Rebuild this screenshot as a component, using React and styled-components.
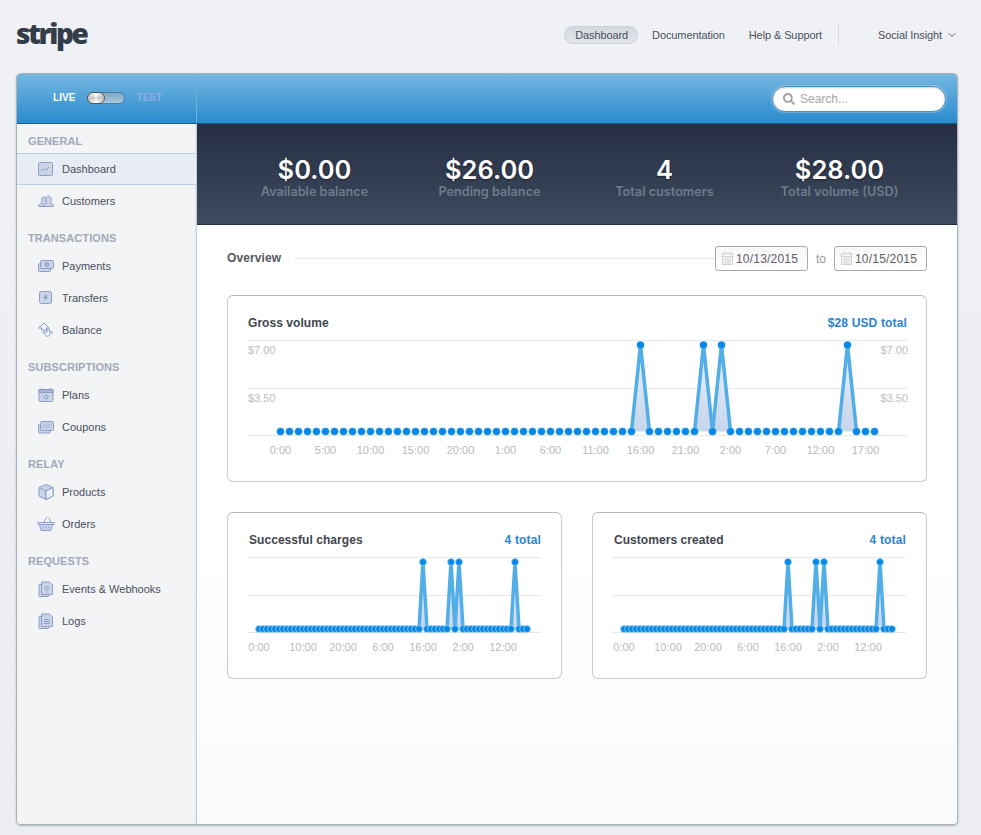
import React from 'react';
import styled, { createGlobalStyle } from 'styled-components';
import { FaSearch } from 'react-icons/fa';
import { ChevronDown } from 'lucide-react';

const GlobalStyle = createGlobalStyle`
    html, body {
        margin: 0;
        padding: 0;
    }
    body {
        background: #eef0f4;
        font-family: "Liberation Sans", Arial, sans-serif;
        font-size: 12px;
        color: #4b4f5c;
    }
    * {
        box-sizing: border-box;
    }
`;

const Page = styled.div`
    width: 981px;
    height: 835px;
    padding: 0 23px 10px 16px;
    background: linear-gradient(#eff1f5, #ebedf1);
`;

const Header = styled.header`
    height: 73px;
    display: flex;
    align-items: center;
    justify-content: space-between;
    padding-bottom: 3px;
`;

const Logo = styled.div`
    font-family: "Open Sans", "Noto Sans", sans-serif;
    font-weight: 800;
    font-size: 28px;
    letter-spacing: -2.4px;
    color: #333d47;
    line-height: 40px;
    margin-top: -4px;
`;

const Nav = styled.nav`
    display: flex;
    align-items: center;
    font-size: 11px;
    letter-spacing: -0.1px;
    color: #4a4f5c;
`;

const NavLink = styled.a`
    padding: 4px 10px 2px;
    margin-right: ${({ $gap }) => $gap || 4}px;
    height: 18px;
    line-height: 11px;
    border-radius: 9px;
    white-space: nowrap;
    ${({ $active }) =>
        $active
            ? `
        background: linear-gradient(#d5d9e1, #e1e4ea);
        border: 1px solid #ccd1da;
        padding: 3px 9px 1px 10px;
        margin-right: 4px;
    `
            : ''}
`;

const NavDivider = styled.div`
    width: 1px;
    height: 21px;
    background: #d5d8de;
    margin: 0 39px 0 5px;
`;

const AccountMenu = styled.div`
    display: flex;
    align-items: center;
    gap: 4px;
    white-space: nowrap;
    svg {
        color: #6a6f7c;
    }
`;

const Panel = styled.div`
    height: 752px;
    border: 1px solid #a9b2bf;
    border-radius: 5px;
    box-shadow: 0 1px 2px rgba(0, 0, 0, 0.25);
    overflow: hidden;
    display: flex;
    flex-direction: column;
    background: #fff;
`;

const TopBar = styled.div`
    height: 50px;
    flex: none;
    display: flex;
    background: linear-gradient(#74b7e1, #2a8bce);
    border-bottom: 1px solid #14608f;
`;

const ModeSwitch = styled.div`
    width: 180px;
    flex: none;
    border-right: 1px solid #6db1de;
    display: flex;
    align-items: center;
    padding: 0 0 2px 36px;
    font-size: 10px;
    font-weight: 700;
`;

const ModeLabel = styled.span`
    color: ${({ $on }) => ($on ? '#fff' : '#8eaee2')};
    letter-spacing: 0.05px;
`;

const Toggle = styled.div`
    width: 38px;
    height: 12px;
    margin: 0 11px 0 12px;
    border-radius: 6px;
    background: linear-gradient(#7fa9c4, #a9cadf);
    border: 1px solid #4a7ea3;
    position: relative;
`;

const ToggleKnob = styled.div`
    position: absolute;
    left: -1px;
    top: -1px;
    width: 18px;
    height: 12px;
    border-radius: 6px;
    border: 1px solid #555;
    background: conic-gradient(#fff, #c4c4c4, #fff, #c4c4c4, #fff);
`;

const SearchArea = styled.div`
    flex: 1;
    display: flex;
    align-items: center;
    justify-content: flex-end;
    padding-right: 11px;
`;

const SearchBox = styled.div`
    width: 174px;
    height: 26px;
    border-radius: 13px;
    background: #fff;
    border: 1px solid #4f8db8;
    box-shadow: inset 0 1px 2px rgba(0, 0, 0, 0.2), 0 0 0 1px rgba(255, 255, 255, 0.25);
    display: flex;
    align-items: center;
    gap: 5px;
    padding-left: 10px;
    font-size: 12px;
    color: #a8a8a8;
    svg {
        color: #a3a3a3;
    }
`;

const Body = styled.div`
    flex: 1;
    display: flex;
    min-height: 0;
`;

const Sidebar = styled.aside`
    width: 180px;
    flex: none;
    background: #f2f4f6;
    border-right: 1px solid #c4cfe0;
    box-shadow: inset -2px 0 2px -1px #e2e5ea;
`;

const SectionTitle = styled.h4`
    margin: 15px 0 6px;
    padding-left: 11px;
    height: 12px;
    line-height: 12px;
    font-size: 11px;
    font-weight: 700;
    color: #a2a8b9;
    letter-spacing: 0.08px;
    text-transform: uppercase;
    &:first-child {
        margin: 11px 0 7px;
    }
`;

const NavItem = styled.div`
    height: 32px;
    display: flex;
    align-items: center;
    padding-left: 21px;
    gap: 8px;
    font-size: 11px;
    color: #4b4f5c;
    ${({ $active }) =>
        $active
            ? `
        background: #e8edf5;
        border-top: 1px solid #bdd0e6;
        border-bottom: 1px solid #bdd0e6;
        margin-top: -1px;
    `
            : ''}
`;

const IconFrame = styled.svg`
    width: 16px;
    height: 16px;
    flex: none;
    overflow: visible;
    stroke: #8d9dc8;
    stroke-width: 1;
    fill: #ccd5e8;
`;

const Main = styled.main`
    flex: 1;
    min-width: 0;
    display: flex;
    flex-direction: column;
    background: linear-gradient(#fff, #fff 60%, #fafafa);
`;

const StatsBar = styled.section`
    height: 101px;
    flex: none;
    display: grid;
    grid-template-columns: repeat(4, 1fr);
    padding: 7px 30px 0;
    background: linear-gradient(#262f43, #3f4a5e);
    border-bottom: 1px solid #252c3d;
    align-items: center;
`;

const Stat = styled.div`
    text-align: center;
    font-family: Inter, sans-serif;
`;

const StatValue = styled.div`
    color: #fff;
    font-size: 25.5px;
    font-weight: 600;
    line-height: 28px;
    text-shadow: 0 1px 2px rgba(0, 0, 0, 0.5);
`;

const StatLabel = styled.div`
    color: #6f7a8b;
    font-size: 12.7px;
    font-weight: 600;
    line-height: 16px;
`;

const Content = styled.div`
    padding: 21px 30px 0;
`;

const OverviewRow = styled.div`
    height: 25px;
    display: flex;
    align-items: center;
`;

const OverviewTitle = styled.div`
    font-weight: 700;
    font-size: 12px;
    letter-spacing: 0.1px;
    color: #55585f;
    margin: 0 14px 2px 0;
`;

const DottedRule = styled.div`
    flex: 1;
    border-top: 1px dotted #dcdcdc;
    margin-bottom: 1px;
`;

const DateBox = styled.div`
    width: 93px;
    height: 25px;
    border: 1px solid #a9a9a9;
    border-radius: 3px;
    background: linear-gradient(#f7f7f7, #fff);
    display: flex;
    align-items: center;
    gap: 1px;
    padding-left: 5px;
    font-size: 12px;
    letter-spacing: 0.2px;
    color: #5f6166;
`;

const DateSeparator = styled.span`
    width: 26px;
    text-align: center;
    color: #9a9a9a;
    font-size: 12px;
`;

const Card = styled.section`
    height: ${({ $height }) => $height}px;
    border: 1px solid #c9c9c9;
    border-top-color: #b5b5b5;
    border-radius: 6px;
    background: #fff;
    padding: 20px ${({ $small }) => ($small ? '20px' : '18px')} 0 20px;
    flex: 1 1 0;
    min-width: 0;
`;

const CardHeader = styled.div`
    display: flex;
    justify-content: space-between;
    line-height: 14px;
    font-size: 12px;
    font-weight: 700;
    letter-spacing: 0.05px;
    color: #42454c;
    margin: ${({ $small }) => ($small ? '0 0 6px 1px' : '0 1px 6px 0')};
`;

const CardTotal = styled.span`
    color: #2b82d6;
    letter-spacing: 0.15px;
`;

const ChartSvg = styled.svg`
    display: block;
    font-family: "Liberation Sans", Arial, sans-serif;
    font-size: 11px;
`;

const CardRow = styled.div`
    display: flex;
    gap: 30px;
    margin-top: 30px;
`;

const OverviewCard = styled(Card)`
    margin-top: 24px;
`;

const icons = {
    dashboard: (
        <>
            <rect x="0.5" y="1.5" width="14" height="13" rx="1" />
            <path d="M3 10l2.5-2 2 1.5L11 6" fill="none" />
        </>
    ),
    customers: (
        <>
            <path d="M0.5 13.5c0-2.500 2-2.500 3.500-3.500-1-1.500-1-6 2-6 1.500 0 2.500 1 2.500 3v3l2 3.500z" />
            <path d="M5 13.500c0-2.500 2-3 3.500-3.500-1.200-1.500-1.200-7 2-7s3.200 5.500 2 7c1.500.5 3 1 3 3.500z" />
        </>
    ),
    payments: (
        <>
            <rect x="0.5" y="5.5" width="12" height="8" rx="1.5" />
            <rect x="2.5" y="2.5" width="13" height="8" rx="1" />
            <circle cx="9" cy="6.5" r="2" fill="#a9b6d6" />
        </>
    ),
    transfers: (
        <>
            <rect x="1.5" y="1.5" width="12" height="12" rx="2" />
            <path d="M7.5 10l-2.5-3h1.5V5h2v2H10z" fill="#8d9dc8" stroke="none" />
        </>
    ),
    balance: (
        <>
            <path d="M0.5 6L6 1l5 5H8.500v2h-5V6z" fill="#eef1f7" />
            <path d="M9 7h2.500v3h3L9.500 15 4.500 10h4.500z" fill="#eef1f7" />
        </>
    ),
    plans: (
        <>
            <rect x="1" y="2.500" width="14" height="12" rx="1.500" />
            <rect x="1" y="2.500" width="14" height="3" fill="#aab7d6" />
            <path d="M4 1v3M12 1v3" />
            <circle cx="8" cy="10" r="2" fill="none" />
        </>
    ),
    coupons: (
        <>
            <rect x="0.5" y="5" width="12" height="9" rx="1.500" />
            <rect x="2.500" y="2.500" width="13" height="9" rx="1" />
            <rect x="4.500" y="4.500" width="9" height="5" fill="#bcc7df" stroke="none" />
        </>
    ),
    products: (
        <>
            <path d="M8 0.5l7 3v8.500l-7 3.500-7-3.500V3.500z" />
            <path d="M1 3.500l7 3.500 7-3.500M8 7v8.500" fill="none" />
            <path d="M8 7l7-3.500V12l-7 3.500z" fill="#eef1f7" />
        </>
    ),
    orders: (
        <>
            <path d="M9 1L5 7M11 2l2 5" fill="none" />
            <path d="M0 6.500h16v2H0z" fill="#eef1f7" />
            <path d="M1.500 8.500h13l-1.500 6H3z" />
            <path d="M5 10.500v2M8 10.500v2M11 10.500v2" fill="none" />
        </>
    ),
    events: (
        <>
            <rect x="1" y="3.500" width="10" height="12" rx="1" />
            <path d="M3.500 1h8l3 3v9.500h-11z" />
            <path d="M6 7c2-1.500 4-1.500 6 0M7 9c1.200-1 2.800-1 4 0" fill="none" />
            <circle cx="9" cy="11" r="0.8" fill="#8d9dc8" stroke="none" />
        </>
    ),
    logs: (
        <>
            <rect x="1" y="3.500" width="10" height="12" rx="1" />
            <path d="M3.500 1h8l3 3v9.500h-11z" />
            <path d="M6 6.500h6M6 8.500h6M6 10.500h6" fill="none" />
        </>
    ),
};

const NavIcon = ({ name }) => <IconFrame viewBox="0 0 16 16">{icons[name]}</IconFrame>;

const CalendarIcon = () => (
    <svg width="14" height="15" viewBox="0 0 14 15" fill="none" stroke="#d2d2d2">
        <rect x="1.5" y="2.5" width="10" height="11" fill="#f4f4f4" />
        <path d="M1.500 5.500h10M4 1v2.500M9 1v2.500M3.500 8h6M3.500 10h6M3.500 12h6" />
    </svg>
);

const SpikeChart = ({ id, width, height, grid, baseY, peakY, points, peaks, labels, yLabels, labelY, dotRadius, dotStroke }) => {
    const spikes = peaks.map(i => {
        const [left, peak, right] = [points[i - 1], points[i], points[i + 1]];
        return `${left},${baseY} ${peak},${peakY} ${right},${baseY}`;
    });
    return (
        <ChartSvg width={width} height={height}>
            <defs>
                <linearGradient id={id} x1="0" x2="0" y1="0" y2="1">
                    <stop offset="0" stopColor="#eef2f9" />
                    <stop offset="1" stopColor="#c6d5ec" />
                </linearGradient>
            </defs>
            {grid.map(y => (
                <line key={y} x1="0" x2={width} y1={y + 0.5} y2={y + 0.5} stroke="#e8e8e8" />
            ))}
            {yLabels &&
                yLabels.map(({ y, text }) => (
                    <g key={text} fill="#bcbcbc">
                        <text x="0" y={y}>
                            {text}
                        </text>
                        <text x={width} y={y} textAnchor="end">
                            {text}
                        </text>
                    </g>
                ))}
            {spikes.map(s => (
                <polygon key={s} points={s} fill={`url(#${id})`} />
            ))}
            {spikes.map(s => (
                <polyline key={s} points={s} fill="none" stroke="#52aee6" strokeWidth="3.5" />
            ))}
            {points.map((x, i) => (
                <circle
                    key={i}
                    cx={x}
                    cy={peaks.includes(i) ? peakY : baseY}
                    r={dotRadius}
                    fill="#0588e6"
                    stroke="#9fd2f5"
                    strokeWidth={dotStroke}
                />
            ))}
            {labels.map(({ x, text }) => (
                <text key={text} x={x} y={labelY} textAnchor="middle" fill="#b9b9b9">
                    {text}
                </text>
            ))}
        </ChartSvg>
    );
};

const GROSS_HOURS = ['0:00', '5:00', '10:00', '15:00', '20:00', '1:00', '6:00', '11:00', '16:00', '21:00', '2:00', '7:00', '12:00', '17:00'];
const grossPoints = Array.from({ length: 67 }, (_, i) => 32.5 + i * 9);
const grossLabels = GROSS_HOURS.map((text, i) => ({ text, x: 32.5 + i * 45 }));

// the small charts start one step early, so the peaks sit one index later
const smallPoints = Array.from({ length: 68 }, (_, i) => 11 + i * 4);
const smallLabels = [
    ['0:00', 11],
    ['10:00', 55],
    ['20:00', 95],
    ['6:00', 135],
    ['16:00', 175],
    ['2:00', 215],
    ['12:00', 255],
].map(([text, x]) => ({ text, x }));

const SmallChart = ({ id }) => (
    <SpikeChart
        id={id}
        width={293}
        height={102}
        grid={[4, 42, 79]}
        baseY={76}
        peakY={9}
        points={smallPoints}
        peaks={[41, 48, 50, 64]}
        labels={smallLabels}
        labelY={98}
        dotRadius={3.5}
        dotStroke={0.7}
    />
);

const SECTIONS = [
    {
        title: 'General',
        items: [
            { label: 'Dashboard', icon: 'dashboard', active: true },
            { label: 'Customers', icon: 'customers' },
        ],
    },
    {
        title: 'Transactions',
        items: [
            { label: 'Payments', icon: 'payments' },
            { label: 'Transfers', icon: 'transfers' },
            { label: 'Balance', icon: 'balance' },
        ],
    },
    {
        title: 'Subscriptions',
        items: [
            { label: 'Plans', icon: 'plans' },
            { label: 'Coupons', icon: 'coupons' },
        ],
    },
    {
        title: 'Relay',
        items: [
            { label: 'Products', icon: 'products' },
            { label: 'Orders', icon: 'orders' },
        ],
    },
    {
        title: 'Requests',
        items: [
            { label: 'Events & Webhooks', icon: 'events' },
            { label: 'Logs', icon: 'logs' },
        ],
    },
];

const STATS = [
    ['$0.00', 'Available balance'],
    ['$26.00', 'Pending balance'],
    ['4', 'Total customers'],
    ['$28.00', 'Total volume (USD)'],
];

const App = () => (
    <Page>
        <GlobalStyle />
        <Header>
            <Logo>stripe</Logo>
            <Nav>
                <NavLink $active>Dashboard</NavLink>
                <NavLink>Documentation</NavLink>
                <NavLink $gap={1}>Help &amp; Support</NavLink>
                <NavDivider />
                <AccountMenu>
                    Social Insight
                    <ChevronDown size={12} />
                </AccountMenu>
            </Nav>
        </Header>
        <Panel>
            <TopBar>
                <ModeSwitch>
                    <ModeLabel $on>LIVE</ModeLabel>
                    <Toggle>
                        <ToggleKnob />
                    </Toggle>
                    <ModeLabel>TEST</ModeLabel>
                </ModeSwitch>
                <SearchArea>
                    <SearchBox>
                        <FaSearch size={12} />
                        Search...
                    </SearchBox>
                </SearchArea>
            </TopBar>
            <Body>
                <Sidebar>
                    {SECTIONS.map(({ title, items }) => (
                        <React.Fragment key={title}>
                            <SectionTitle>{title}</SectionTitle>
                            {items.map(({ label, icon, active }) => (
                                <NavItem key={label} $active={active}>
                                    <NavIcon name={icon} />
                                    {label}
                                </NavItem>
                            ))}
                        </React.Fragment>
                    ))}
                </Sidebar>
                <Main>
                    <StatsBar>
                        {STATS.map(([value, label]) => (
                            <Stat key={label}>
                                <StatValue>{value}</StatValue>
                                <StatLabel>{label}</StatLabel>
                            </Stat>
                        ))}
                    </StatsBar>
                    <Content>
                        <OverviewRow>
                            <OverviewTitle>Overview</OverviewTitle>
                            <DottedRule />
                            <DateBox>
                                <CalendarIcon />
                                10/13/2015
                            </DateBox>
                            <DateSeparator>to</DateSeparator>
                            <DateBox>
                                <CalendarIcon />
                                10/15/2015
                            </DateBox>
                        </OverviewRow>
                        <OverviewCard $height={187}>
                            <CardHeader>
                                <span>Gross volume</span>
                                <CardTotal>$28 USD total</CardTotal>
                            </CardHeader>
                            <SpikeChart
                                id="grossFill"
                                width={660}
                                height={124}
                                grid={[4, 52, 99]}
                                baseY={95.5}
                                peakY={9}
                                points={grossPoints}
                                peaks={[40, 47, 49, 63]}
                                labels={grossLabels}
                                labelY={118}
                                yLabels={[
                                    { y: 18, text: '$7.00' },
                                    { y: 66, text: '$3.50' },
                                ]}
                                dotRadius={3.8}
                                dotStroke={0.3}
                            />
                        </OverviewCard>
                        <CardRow>
                            <Card $small $height={167}>
                                <CardHeader $small>
                                    <span>Successful charges</span>
                                    <CardTotal>4 total</CardTotal>
                                </CardHeader>
                                <SmallChart id="chargesFill" />
                            </Card>
                            <Card $small $height={167}>
                                <CardHeader $small>
                                    <span>Customers created</span>
                                    <CardTotal>4 total</CardTotal>
                                </CardHeader>
                                <SmallChart id="customersFill" />
                            </Card>
                        </CardRow>
                    </Content>
                </Main>
            </Body>
        </Panel>
    </Page>
);

export default App;
